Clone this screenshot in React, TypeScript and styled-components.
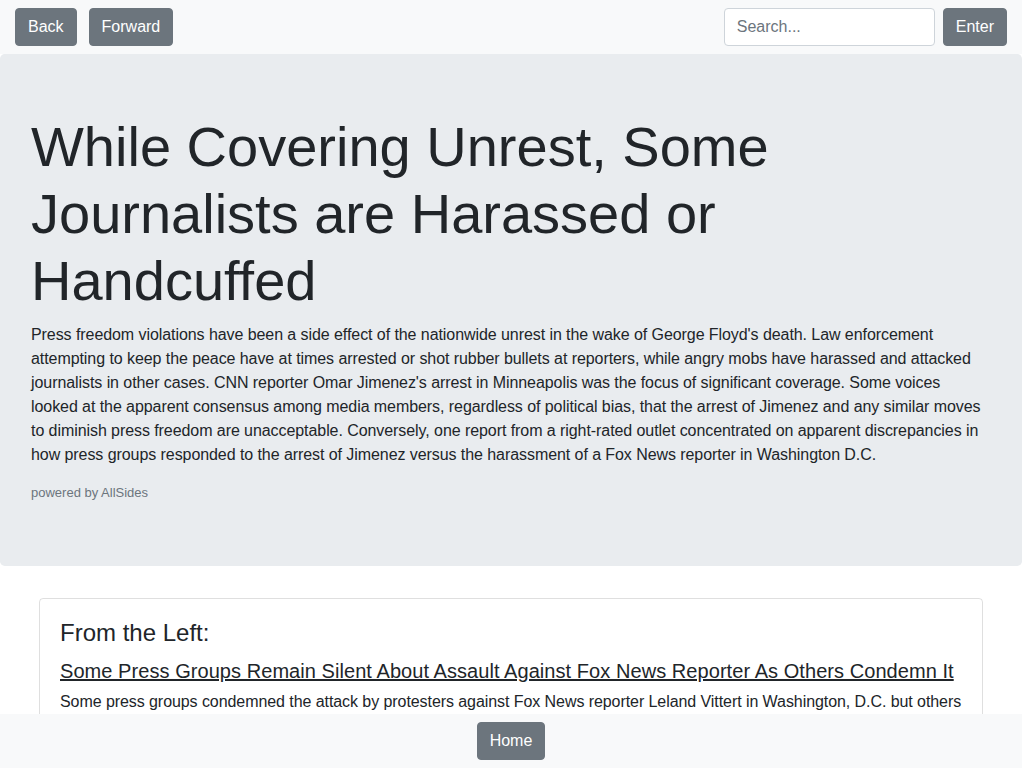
import React from "react";
import styled, { createGlobalStyle } from "styled-components";

const GlobalStyle = createGlobalStyle`
  *, *::before, *::after { box-sizing: border-box; }
  body {
    margin: 0;
    font-family: "Liberation Sans", Arial, Helvetica, sans-serif;
    font-size: 16px;
    line-height: 1.5;
    color: #212529;
    background: #fff;
  }
`;

const Navbar = styled.nav`
  display: flex;
  align-items: center;
  justify-content: space-between;
  padding: 8px 15px;
  background: #f8f9fa;
`;

const Group = styled.div<{ $gap: number }>`
  display: flex;
  align-items: center;
  gap: ${(p) => p.$gap}px;
`;

const Button = styled.button`
  font-family: inherit;
  font-size: 16px;
  line-height: 1.5;
  color: #fff;
  background: #6c757d;
  border: 1px solid #6c757d;
  border-radius: 4px;
  padding: 6px 12px;
  cursor: pointer;
`;

const SearchInput = styled.input`
  width: 211px;
  height: 38px;
  font-family: inherit;
  font-size: 16px;
  line-height: 1.5;
  color: #495057;
  background: #fff;
  border: 1px solid #ced4da;
  border-radius: 4px;
  padding: 6px 12px;
  &::placeholder { color: #6c757d; }
`;

const Jumbotron = styled.header`
  background: #e9ecef;
  padding: 59px 31px 64px;
  margin-bottom: 32px;
  border-radius: 4.8px;
`;

const Title = styled.h1`
  margin: 0 0 8px;
  font-size: 56px;
  font-weight: 400;
  line-height: 1.2;
`;

const Summary = styled.p`
  margin: 0 0 16px;
  letter-spacing: -0.07px;
`;

const Powered = styled.small`
  display: block;
  font-size: 13px;
  line-height: 19px;
  color: #6c757d;
`;

const Container = styled.main`
  padding: 0 15px 200px;
`;

const Card = styled.section`
  margin: 0 24px 24px;
  border: 1px solid rgba(0, 0, 0, 0.125);
  border-radius: 4px;
  padding: 20px;
`;

const CardHeading = styled.h4`
  margin: 0 0 12px;
  font-size: 24px;
  font-weight: 400;
  line-height: 1.2;
`;

const CardTitle = styled.h5`
  margin: 0 0 7px;
  font-size: 20px;
  font-weight: 400;
  line-height: 1.2;
  letter-spacing: 0.06px;
`;

const StoryLink = styled.a`
  color: #212529;
  text-decoration: underline;
`;

const CardText = styled.p`
  margin: 0 0 16px;
  letter-spacing: -0.07px;
`;

const Source = styled.small`
  display: block;
  font-size: 13px;
  color: #6c757d;
`;

const Footer = styled.footer`
  position: fixed;
  left: 0;
  right: 0;
  bottom: 0;
  height: 54px;
  display: flex;
  align-items: center;
  justify-content: center;
  background: #f8f9fa;
`;

const stories = [
  {
    side: "Left",
    title: "Some Press Groups Remain Silent About Assault Against Fox News Reporter As Others Condemn It",
    text:
      "Some press groups condemned the attack by protesters against Fox News reporter Leland Vittert in Washington, D.C. but others remained silent, drawing criticism from journalists who noted the swift response to the arrest of CNN's Omar Jimenez in Minneapolis. Vittert and his crew were chased and assaulted while covering protests near the White House, and their equipment was damaged in the process.",
    source: "Source: The Daily Caller",
  },
  {
    side: "Center",
    title: "Journalists Covering Protests Face Arrests, Rubber Bullets and Tear Gas",
    text:
      "Reporters covering demonstrations across the country over the weekend found themselves targeted by police and protesters alike. Several journalists were struck by rubber bullets or pepper balls, others were arrested while broadcasting live, and press freedom organizations tracked dozens of incidents in cities from Minneapolis to Louisville, Los Angeles and New York.",
    source: "Source: Associated Press",
  },
  {
    side: "Right",
    title: "CNN Reporter Omar Jimenez Arrested on Live Television in Minneapolis",
    text:
      "CNN correspondent Omar Jimenez and his crew were handcuffed and taken into custody by Minnesota State Patrol troopers while reporting live on the unrest following the death of George Floyd. The governor later apologized, and the crew was released about an hour after the arrest, which drew widespread condemnation from press groups and media members.",
    source: "Source: CNN",
  },
];

export default function App() {
  return (
    <>
      <GlobalStyle />
      <Navbar>
        <Group $gap={12}>
          <Button>Back</Button>
          <Button>Forward</Button>
        </Group>
        <Group $gap={8}>
          <SearchInput placeholder="Search..." />
          <Button>Enter</Button>
        </Group>
      </Navbar>
      <Jumbotron>
        <Title>While Covering Unrest, Some Journalists are Harassed or Handcuffed</Title>
        <Summary>
          Press freedom violations have been a side effect of the nationwide unrest in the wake of George Floyd's
          death. Law enforcement attempting to keep the peace have at times arrested or shot rubber bullets at
          reporters, while angry mobs have harassed and attacked journalists in other cases. CNN reporter Omar
          Jimenez's arrest in Minneapolis was the focus of significant coverage. Some voices looked at the apparent
          consensus among media members, regardless of political bias, that the arrest of Jimenez and any similar
          moves to diminish press freedom are unacceptable. Conversely, one report from a right-rated outlet
          concentrated on apparent discrepancies in how press groups responded to the arrest of Jimenez versus the
          harassment of a Fox News reporter in Washington D.C.
        </Summary>
        <Powered>powered by AllSides</Powered>
      </Jumbotron>
      <Container>
        {stories.map((s) => (
          <Card key={s.side}>
            <CardHeading>From the {s.side}:</CardHeading>
            <CardTitle>
              <StoryLink href="#">{s.title}</StoryLink>
            </CardTitle>
            <CardText>{s.text}</CardText>
            <Source>{s.source}</Source>
          </Card>
        ))}
      </Container>
      <Footer>
        <Button>Home</Button>
      </Footer>
    </>
  );
}
